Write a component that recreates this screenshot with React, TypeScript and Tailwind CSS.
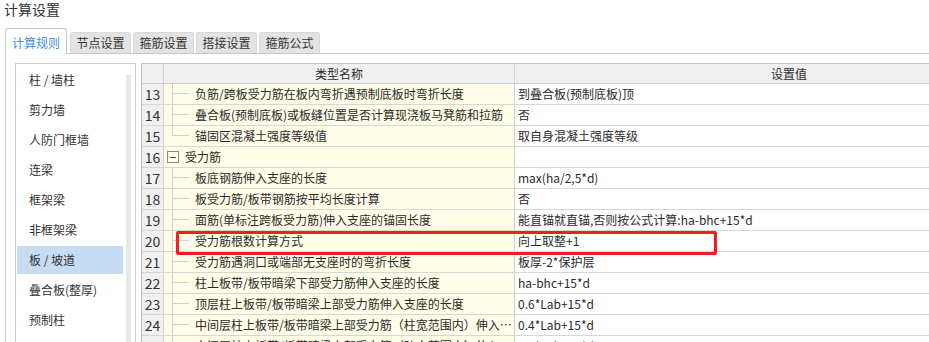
import React from "react";

type Row = { n: number; name: string; val: string; tree: "mid" | "last" | "group" };

const rows: Row[] = [
  { n: 13, name: "负筋/跨板受力筋在板内弯折遇预制底板时弯折长度", val: "到叠合板(预制底板)顶", tree: "mid" },
  { n: 14, name: "叠合板(预制底板)或板缝位置是否计算现浇板马凳筋和拉筋", val: "否", tree: "mid" },
  { n: 15, name: "锚固区混凝土强度等级值", val: "取自身混凝土强度等级", tree: "last" },
  { n: 16, name: "受力筋", val: "", tree: "group" },
  { n: 17, name: "板底钢筋伸入支座的长度", val: "max(ha/2,5*d)", tree: "mid" },
  { n: 18, name: "板受力筋/板带钢筋按平均长度计算", val: "否", tree: "mid" },
  { n: 19, name: "面筋(单标注跨板受力筋)伸入支座的锚固长度", val: "能直锚就直锚,否则按公式计算:ha-bhc+15*d", tree: "mid" },
  { n: 20, name: "受力筋根数计算方式", val: "向上取整+1", tree: "mid" },
  { n: 21, name: "受力筋遇洞口或端部无支座时的弯折长度", val: "板厚-2*保护层", tree: "mid" },
  { n: 22, name: "柱上板带/板带暗梁下部受力筋伸入支座的长度", val: "ha-bhc+15*d", tree: "mid" },
  { n: 23, name: "顶层柱上板带/板带暗梁上部受力筋伸入支座的长度", val: "0.6*Lab+15*d", tree: "mid" },
  { n: 24, name: "中间层柱上板带/板带暗梁上部受力筋（柱宽范围内）伸入支座的长度", val: "0.4*Lab+15*d", tree: "mid" },
  { n: 25, name: "中间层柱上板带/板带暗梁上部受力筋（跨中范围内）伸入支座的长度", val: "0.6*Lab+15*d", tree: "mid" },
];

const listItems = ["柱 / 墙柱", "剪力墙", "人防门框墙", "连梁", "框架梁", "非框架梁", "板 / 坡道", "叠合板(整厚)", "预制柱"];

const tabs = ["节点设置", "箍筋设置", "搭接设置", "箍筋公式"];

function TreeLead({ kind }: { kind: "mid" | "last" }) {
  return (
    <div className="flex h-full shrink-0">
      <div className="w-[8px]" />
      <div className="flex flex-col w-[17px] h-full">
        <div className="h-[10px] border-l border-b border-[#d2d2d2]" />
        <div className={kind === "mid" ? "flex-1 border-l border-[#d2d2d2]" : "flex-1"} />
      </div>
      <div className="w-[6px]" />
    </div>
  );
}

export default function App() {
  return (
    <div className="relative w-[929px] h-[342px] overflow-hidden bg-white text-[#2b2b2b] font-['Noto_Sans_CJK_SC',sans-serif]">
      {/* title */}
      <div className="h-[28px] pl-[4px] text-[14px] leading-[18px] text-[#333]">计算设置</div>

      {/* tabs */}
      <div className="flex h-[26px] pl-[5px]">
        <div className="w-[62px] h-[26px] border border-b-0 border-[#c8c8c8] rounded-t-[3px] bg-white flex items-center justify-center pt-[3px] text-[12px] leading-[18px] text-[#3d8fe0]">
          计算规则
        </div>
        <div className="flex-1 h-full flex items-end border-b border-[#c8c8c8] pl-[3px] gap-[2px]">
          {tabs.map((t) => (
            <div
              key={t}
              className="w-[61px] h-[21px] bg-[#e3e3e3] border border-b-0 border-[#d8d8d8] rounded-t-[3px] flex items-center justify-center text-[12px] leading-[18px] text-[#333]"
            >
              {t}
            </div>
          ))}
        </div>
      </div>

      {/* content */}
      <div className="ml-[5px] border-l border-[#c8c8c8] pt-[9px] pl-[9px] flex h-[290px] overflow-hidden">
        {/* left list */}
        <div className="w-[121px] h-[300px] border border-[#cfcfcf] flex shrink-0">
          <div className="ml-[1px] w-[106px] pt-[1px] flex flex-col">
            {listItems.map((it, i) => (
              <div
                key={it}
                className={
                  "h-[28px] my-[1px] pl-[12px] flex items-center text-[12px] leading-[18px] text-[#333] " +
                  (i === 6 ? "bg-[#c6dcf2]" : "")
                }
              >
                {it}
              </div>
            ))}
          </div>
          <div className="w-[3px]" />
          <div className="w-[5px] mt-[11px] bg-[#e8e8e8]" />
          <div className="w-[4px]" />
        </div>

        {/* table */}
        <div className="ml-[5px] flex-1 overflow-hidden">
          <div className="w-[922px] border-l border-t border-[#bfbfbf] text-[12px] leading-[18px]">
            {/* header */}
            <div className="flex h-[20px] border-b border-[#d0d0d0] bg-[#f0f0f0]">
              <div className="w-[22px] border-r border-[#d0d0d0]" />
              <div className="w-[351px] border-r border-[#d0d0d0] flex items-center justify-center">类型名称</div>
              <div className="w-[548px] flex items-center justify-center">设置值</div>
            </div>
            {rows.map((r) => (
              <div key={r.n} className="flex h-[21px] border-b border-[#d6d6d6] overflow-hidden">
                <div className="w-[22px] border-r border-[#d0d0d0] bg-[#f0f0f0] flex items-center justify-center text-[14px] leading-[18px] text-[#333]">
                  {r.n}
                </div>
                <div className="w-[351px] border-r border-[#d0d0d0] bg-[#fffde8] flex items-stretch overflow-hidden">
                  {r.tree === "group" ? (
                    <div className="flex items-center">
                      <div className="w-[3px]" />
                      <div className="w-[12px] h-[12px] border border-[#8a8a8a] flex items-center justify-center">
                        <div className="w-[6px] h-px bg-[#555]" />
                      </div>
                      <div className="w-[6px]" />
                    </div>
                  ) : (
                    <TreeLead kind={r.tree} />
                  )}
                  <div className="flex items-center min-w-0 whitespace-nowrap overflow-hidden text-ellipsis pr-[2px]">
                    <span className="overflow-hidden text-ellipsis">{r.name}</span>
                  </div>
                </div>
                <div className="w-[548px] pl-[3px] flex items-center whitespace-nowrap">{r.val}</div>
              </div>
            ))}
          </div>
        </div>
      </div>

      {/* highlight box */}
      <div className="absolute left-[176px] top-[231px] w-[541px] h-[24px] border-[3px] border-[#f21d1d] rounded-[2px]" />
    </div>
  );
}
